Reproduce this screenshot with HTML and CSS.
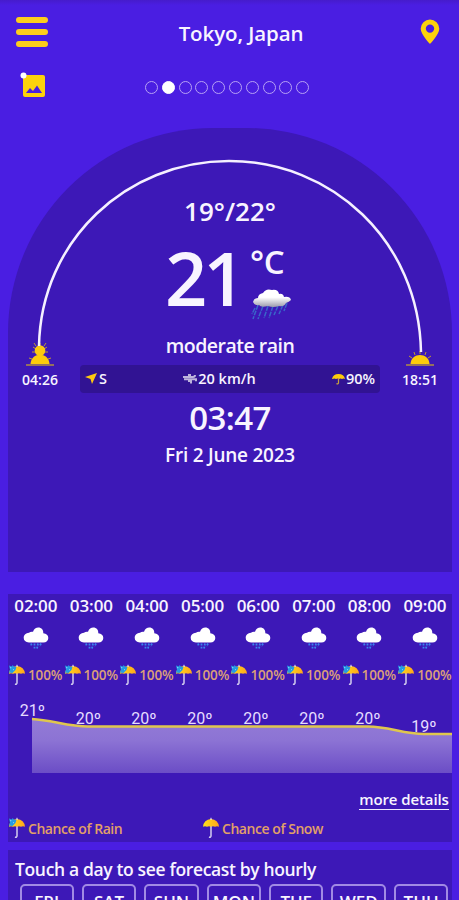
FILE: index.html
```html
<!DOCTYPE html>
<html lang="en">
<head>
  <meta charset="UTF-8">
  <meta name="viewport" content="width=device-width, initial-scale=1.0">
  <title>Weather</title>
  <link rel="stylesheet" href="styles.css">
</head>
<body>
  <!-- shared icons -->
  <svg class="defs" width="0" height="0">
    <defs>
      <linearGradient id="umbrella-fill" x1="0" y1="0" x2="1" y2="0">
        <stop offset="0" stop-color="#ffe11a"/>
        <stop offset="1" stop-color="#ffa51c"/>
      </linearGradient>
      <symbol id="cloud" viewBox="0 0 26 22">
        <path fill="#fff" d="M6 15.500C2.500 15.500.7 13.500.7 10.800S3 6 6 5.800Q7.800 4.300 10 4.800C11 1.800 13 .5 15.300.5c3.200 0 5.200 2.300 5 5.700 3 .2 5 2 5 4.700s-2 4.600-5 4.600z"/>
        <path stroke="#3b86ee" stroke-width="1.800" stroke-dasharray="2 1.200" d="M8 16.500l1 3M11.500 16.500l0 5M15 16.500l-1 5M18 16.500l-1.500 3"/>
      </symbol>
      <symbol id="umbrella" viewBox="0 0 18 22">
        <path fill="none" stroke="#d3cdf0" stroke-width="1.500" d="M9 8v11q-.2 1.700-2 1"/>
        <path fill="url(#umbrella-fill)" d="M1 9.800Q1.800 2.500 9 2q7.200.5 8 7.800-2-1.300-4 0-2-1.300-4 0-2-1.300-4 0-2-1.300-4 0z"/>
        <path stroke="#fff" stroke-width="1" d="M9 .8V3"/>
      </symbol>
      <symbol id="drops" viewBox="0 0 18 22">
        <path fill="#249be4" d="M1 1.500l3 1 .5-1.500 2 2 2-.5-1 3.500-3 3-3.500-.5 1-3z"/>
        <path fill="#a8e8ff" d="M2 3l1.500.5-.8 1zM5 5l1 .5-1 1z"/>
      </symbol>
    </defs>
  </svg>

  <header class="topbar">
    <div class="menu"><span></span><span></span><span></span></div>
    <h1>Tokyo, Japan</h1>
    <svg class="pin" width="20" height="26" viewBox="0 0 20 26">
      <path fill="#fdd20c" fill-rule="evenodd" d="M10 .500a9.300 9.300 0 0 0-9.300 9.300C.7 15.500 10 25 10 25s9.300-9.500 9.300-15.200A9.300 9.300 0 0 0 10 .5zm0 4.900a4.200 4.200 0 1 1 0 8.400 4.200 4.200 0 0 1 0-8.400z"/>
    </svg>
  </header>

  <div class="subbar">
    <svg class="photo" width="26" height="26" viewBox="0 0 26 26">
      <rect x="3" y="3" width="22" height="22" rx="2" fill="#fdd20c"/>
      <path fill="#4a1ee2" d="M6 21l4-5 3 3 4-5.500 5 7.500z"/>
      <circle cx="3.500" cy="3.500" r="3" fill="#fff"/>
    </svg>
    <div class="dots">
      <i></i><i class="active"></i><i></i><i></i><i></i><i></i><i></i><i></i><i></i><i></i>
    </div>
  </div>

  <section class="today">
    <svg class="arc" width="444" height="250" viewBox="0 0 444 250">
      <path fill="none" stroke="#f5f0ff" stroke-width="2.500" d="M31 218C33 112 119 33 221 33S411 112 413 224"/>
    </svg>
    <div class="range">19°/22°</div>
    <div class="temp">
      <span class="degrees">21</span>
      <div class="unit">
        <span>°C</span>
        <svg width="42" height="34" viewBox="0 0 42 34">
          <defs>
            <linearGradient id="storm" x1="0" y1="0" x2="0" y2="1">
              <stop offset="0.450" stop-color="#fff"/>
              <stop offset="1" stop-color="#9c9bac"/>
            </linearGradient>
          </defs>
          <path stroke="#3966c9" stroke-width="1.500" stroke-dasharray="5 1" d="M8 17L3 31M13 18L8 31M18 18l-4 12M23 18l-4 12M28 18l-4 9M33 17l-4 9M37 15l-3 8M5 20l-3 6"/>
          <path fill="url(#storm)" d="M3 14Q4 10 8 10Q8 6 13 5Q16 0 22 2Q28 1 29 6Q33 5 34 9Q40 8 41 12Q39 14 36 15Q34 19 29 18Q23 20 18 18Q11 20 9 17Q5 18 3 14z"/>
        </svg>
      </div>
    </div>
    <div class="condition">moderate rain</div>
    <div class="sun-row">
      <div class="sun">
        <svg width="30" height="26" viewBox="0 0 30 26">
          <path stroke="#c19a32" stroke-width="1" d="M8 4l3 2M22 4l-3 2M7 9h3M23 9h-3M9 0l2 3M21 0l-2 3M4 15l3 1M26 15l-3 1M15 0v3"/>
          <circle cx="15" cy="7.500" r="5.300" fill="#fdc910"/>
          <path fill="#fdcb0c" d="M5.500 21C6 8.500 24 8.500 24.500 21z"/>
          <path stroke="#94705e" stroke-width="2" d="M1 22h28"/>
        </svg>
        <span>04:26</span>
      </div>
      <div class="stats">
        <div>
          <svg width="13" height="12" viewBox="0 0 13 12"><path fill="#fdc910" d="M0 4L12 0 7 11 5.500 6z"/></svg>
          <span>S</span>
        </div>
        <div>
          <svg width="14" height="12" viewBox="0 0 14 12"><path fill="none" stroke="#bdb4dc" stroke-width="2" d="M0 4h10q2 0 2-2M1 6.200h12v2M5 8h3v2.500M5 2h3"/></svg>
          <span>20 km/h</span>
        </div>
        <div>
          <svg width="13" height="12" viewBox="0 0 13 12"><path fill="#fdcb0c" d="M0 6Q1 1 6.500 1T13 6q-1.500-1-3 0-1.500-1-3 0-1.500-1-3 0-1.500-1-3.500 0z"/><path fill="none" stroke="#c9a23c" stroke-width="1.200" d="M6.500 5v5q-.5 1.500-2 .5"/></svg>
          <span>90%</span>
        </div>
      </div>
      <div class="sun">
        <svg width="30" height="26" viewBox="0 0 30 26">
          <path stroke="#c19a32" stroke-width="1" d="M15 8v3M9 9l1 3M21 9l-1 3M4 13l3 2M26 13l-3 2"/>
          <path fill="#fdcb0c" d="M5.500 21C6 9 24 9 24.500 21z"/>
          <path stroke="#94705e" stroke-width="2" d="M1 22h28"/>
        </svg>
        <span>18:51</span>
      </div>
    </div>
    <div class="clock">03:47</div>
    <div class="date">Fri 2 June 2023</div>
  </section>

  <section class="hourly">
    <div class="hours" id="hours"></div>
    <div class="chart">
      <svg width="444" height="80" viewBox="0 0 444 80">
        <defs>
          <linearGradient id="area" x1="0" y1="0" x2="0" y2="1">
            <stop offset="0" stop-color="#937bd6"/>
            <stop offset="0.400" stop-color="#8c73d4"/>
            <stop offset="1" stop-color="#6b4dc6"/>
          </linearGradient>
        </defs>
        <path fill="url(#area)" d="M24 25C44 26 60 32.500 80 32.500H360C380 32.500 396 40 416 40H444V79H24z"/>
        <path fill="none" stroke="#dfc64e" stroke-width="2.600" d="M24 25C44 26 60 32.500 80 32.500H360C380 32.500 396 40 416 40H444"/>
        <g class="labels">
          <text x="24.500" y="22">21º</text>
          <text x="80.500" y="30">20º</text>
          <text x="136" y="30">20º</text>
          <text x="192" y="30">20º</text>
          <text x="248" y="30">20º</text>
          <text x="304" y="30">20º</text>
          <text x="360" y="30">20º</text>
          <text x="416" y="38">19º</text>
        </g>
      </svg>
    </div>
    <a class="more">more details</a>
    <div class="legend">
      <div><svg width="18" height="22"><use href="#umbrella"/><use href="#drops"/></svg>Chance of Rain</div>
      <div><svg width="18" height="22"><use href="#umbrella"/></svg>Chance of Snow</div>
    </div>
  </section>

  <section class="daily">
    <h2>Touch a day to see forecast by hourly</h2>
    <div class="days">
      <button>FRI</button>
      <button>SAT</button>
      <button>SUN</button>
      <button>MON</button>
      <button>TUE</button>
      <button>WED</button>
      <button>THU</button>
    </div>
  </section>

  <script>
    const hours = ['02:00', '03:00', '04:00', '05:00', '06:00', '07:00', '08:00', '09:00'];
    document.getElementById('hours').innerHTML = hours.map(h => `
      <div class="hour">
        <span>${h}</span>
        <svg class="cloud" width="26" height="22"><use href="#cloud"/></svg>
        <div class="chance"><svg width="18" height="22"><use href="#umbrella"/><use href="#drops"/></svg>100%</div>
      </div>`).join('');
  </script>
</body>
</html>
```
FILE: styles.css
```css
* {
  box-sizing: border-box;
}
body {
  margin: 0;
  width: 459px;
  height: 900px;
  overflow: hidden;
  background: linear-gradient(#461bcb, #4a1ee2 5px);
  color: #f8f4ff;
  font-family: "Open Sans", "Noto Sans", sans-serif;
  font-weight: 600;
}
h1, h2 {
  margin: 0;
  font-weight: 600;
}
svg {
  display: block;
  flex: none;
}
.defs {
  position: absolute;
}
.topbar {
  display: flex;
  align-items: center;
  justify-content: space-between;
  height: 64px;
  padding: 0 19px 0 16px;
}
.topbar h1 {
  font-size: 20.500px;
  letter-spacing: -0.1px;
  padding: 1px 0 0 14px;
}
.menu {
  display: flex;
  flex-direction: column;
  gap: 5.500px;
}
.menu span {
  width: 32px;
  height: 6.300px;
  border-radius: 3px;
  background: #fdcd1c;
}
.subbar {
  display: flex;
  align-items: center;
  height: 64px;
  padding: 0 0 24px 20px;
}
.photo {
  margin-top: 1px;
}
.dots {
  display: flex;
  gap: 3.800px;
  margin: 7px 0 0 99px;
}
.dots i {
  width: 13px;
  height: 13px;
  border: 1.500px solid #b7a1f5;
  border-radius: 50%;
}
.dots .active {
  background: #fff;
  border-color: #fff;
}

/* current weather */
.today {
  position: relative;
  height: 444px;
  margin: 0 7px 0 8px;
  padding-top: 66px;
  border-radius: 205px 205px 0 0;
  background: #3d18b7;
  text-align: center;
}
.arc {
  position: absolute;
  top: 0;
  left: 0;
}
.range {
  height: 34px;
  line-height: 34px;
  font-size: 26px;
}
.temp {
  display: flex;
  height: 100px;
  margin-left: 157px;
}
.degrees {
  width: 85px;
  line-height: 99px;
  font-size: 74px;
  letter-spacing: -4px;
  text-align: left;
}
.unit span {
  display: block;
  height: 60px;
  line-height: 68px;
  font-size: 33px;
  letter-spacing: -0.5px;
  text-align: left;
}
.condition {
  height: 34px;
  line-height: 36px;
  font-size: 19.500px;
  letter-spacing: -0.5px;
}
.sun-row {
  display: flex;
  justify-content: space-between;
  height: 42px;
  margin-top: -19px;
  padding: 0 12px;
  margin-bottom: 13px;
}
.sun {
  display: flex;
  flex-direction: column;
  align-items: center;
  width: 40px;
  font-size: 14px;
  line-height: 19px;
}
.sun svg {
  margin-right: 1px;
}
.sun span {
  margin-top: 1px;
}
.stats {
  display: flex;
  justify-content: space-between;
  align-items: center;
  width: 300px;
  height: 28px;
  margin-top: 22px;
  padding: 0 5px;
  border-radius: 4px;
  background: #311393;
  font-size: 14.500px;
}
.stats div {
  display: flex;
  align-items: center;
  gap: 1px;
}
.stats span {
  margin-top: -1px;
}
.clock {
  height: 42px;
  line-height: 40px;
  font-size: 33px;
  letter-spacing: -0.6px;
}
.date {
  height: 32px;
  line-height: 30px;
  font-size: 19px;
  letter-spacing: -0.25px;
}

/* hour by hour */
.hourly {
  height: 248px;
  margin: 22px 7px 0 8px;
  background: #3d18b7;
}
.hours {
  display: grid;
  grid-template-columns: repeat(8, 55.600px);
}
.hour {
  display: flex;
  flex-direction: column;
  align-items: center;
  font-size: 17px;
  letter-spacing: -0.1px;
  line-height: 24px;
}
.cloud {
  margin: 9px 0 13px;
}
.chance {
  display: flex;
  align-items: center;
  align-self: flex-start;
  gap: 2px;
  height: 24px;
  padding-top: 1px;
  color: #dca078;
  font-size: 13.500px;
}
.chart {
  height: 80px;
  margin-top: 8px;
}
.labels {
  fill: #e5dcff;
  font-family: Roboto, sans-serif;
  font-size: 16px;
  font-weight: 400;
  text-anchor: middle;
}
.more {
  display: block;
  width: 90px;
  height: 21px;
  margin: 15px 3px 0 auto;
  border-bottom: 1.500px solid #eee8ff;
  font-size: 15px;
  letter-spacing: -0.1px;
  line-height: 21px;
  text-align: center;
  white-space: nowrap;
}
.legend {
  display: flex;
  height: 24px;
  margin-top: 6px;
  color: #e2a067;
  font-size: 14px;
  letter-spacing: -0.45px;
}
.legend div {
  display: flex;
  align-items: center;
  gap: 2px;
  width: 194px;
}

/* day picker */
.daily {
  height: 70px;
  margin: 8px 7px 0 8px;
  padding-top: 6px;
  background: #3d18b7;
}
.daily h2 {
  padding-left: 7px;
  font-size: 17.500px;
  letter-spacing: -0.35px;
  line-height: 26px;
}
.days {
  display: flex;
  gap: 8px;
  margin: 2px 0 0 11.500px;
}
.days button {
  width: 54.400px;
  height: 34px;
  padding: 0;
  border: 2px solid #a18ae4;
  border-radius: 5px;
  background: none;
  color: #f8f4ff;
  font: 600 17px "Open Sans", sans-serif;
}
```
